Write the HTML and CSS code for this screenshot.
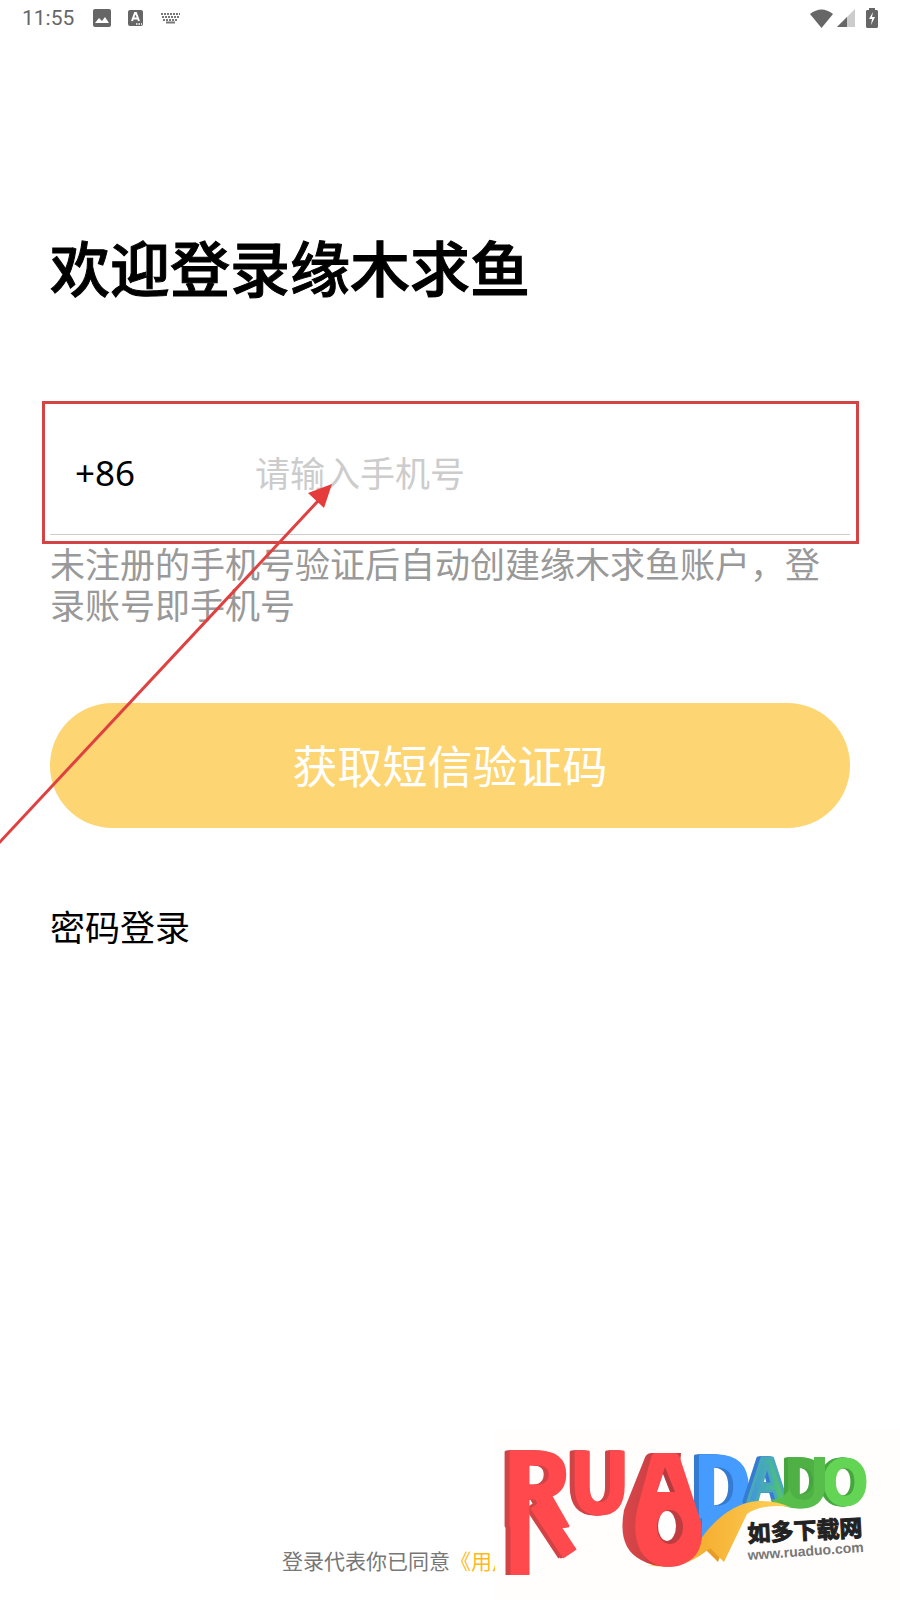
FILE: index.html
```html
<!DOCTYPE html>
<html lang="zh-CN">
<head>
<meta charset="utf-8">
<meta name="viewport" content="width=device-width, initial-scale=1">
<title>欢迎登录缘木求鱼</title>
<link rel="stylesheet" href="styles.css">
</head>
<body>
<div class="screen">
  <header class="status">
    <div class="status-left">
      <time class="clock">11:55</time>
      <svg class="icon" width="18" height="18" viewBox="0 0 18 18"><rect width="18" height="18" rx="2" fill="#666"/><path d="M2 14l4-5 3 3 3-4 4 6z" fill="#fff"/></svg>
      <svg class="icon" width="16" height="18" viewBox="0 0 16 18"><rect y="1" width="15" height="16" rx="2" fill="#666"/><path d="M4 12L7 4h1l3 8M5.300 9.500h4.400" fill="none" stroke="#fff" stroke-width="2"/><path d="M8 15h6" stroke="#fff" stroke-width="1.500" stroke-dasharray="1.500 1"/></svg>
      <svg class="icon" width="20" height="12" viewBox="0 0 20 12"><path d="M0 2h19M1 5h17M2 8h15" stroke="#777" stroke-width="2" stroke-dasharray="2 1"/><path d="M5 10.500h9" stroke="#777" stroke-width="2"/></svg>
    </div>
    <div class="status-right">
      <svg class="icon" width="23" height="19" viewBox="0 0 23 19"><path d="M0 5Q11.500-4 23 5L11.500 19z" fill="#666"/></svg>
      <svg class="icon" width="18" height="18" viewBox="0 0 18 18"><path d="M18 0v18H0z" fill="#ccc"/><path d="M10 8v10H0z" fill="#666"/></svg>
      <svg class="icon battery" width="12" height="20" viewBox="0 0 12 20"><path d="M3 2V0h6v2h2l1 1v16l-1 1H1l-1-1V3l1-1z" fill="#666"/><path d="M7 4L3 11h3l-1 6 4-8H6z" fill="#fff"/></svg>
    </div>
  </header>

  <main class="login">
    <h1 class="title">欢迎登录缘木求鱼</h1>
    <form class="form">
      <div class="phone">
        <button class="code" type="button" aria-label="国家代码">+86</button>
        <input class="number" type="tel" aria-label="手机号" placeholder="请输入手机号">
      </div>
      <p class="hint">未注册的手机号验证后自动创建缘木求鱼账户，登录账号即手机号</p>
      <button class="submit" type="button">获取短信验证码</button>
    </form>
    <a class="password" href="#">密码登录</a>
  </main>

  <footer class="footer">
    <p class="terms">登录代表你已同意<a class="agreement" href="#">《用户</a></p>
  </footer>

  <svg class="arrow" width="340" height="380" viewBox="0 0 340 380"><path d="M-2 376L318 33" stroke="#df4040" stroke-width="3"/><path d="M332 16l-24 9 16 15z" fill="#e53b3b"/></svg>

  <svg class="logo" width="405" height="170" viewBox="495 1430 405 170" role="img" aria-label="如多下载网">
    <defs>
      <linearGradient id="blend"><stop offset="0" stop-color="#438fee"/><stop offset=".6" stop-color="#45b69b"/><stop offset="1" stop-color="#5cc853"/></linearGradient>
      <linearGradient id="gold"><stop offset="0" stop-color="#ffc52d"/><stop offset=".4" stop-color="#f5b033"/><stop offset="1" stop-color="#ffd35b"/></linearGradient>
      <linearGradient id="side"><stop offset="0" stop-color="#d94649"/><stop offset="1" stop-color="#bd3a3f"/></linearGradient>
    </defs>
    <rect x="495" y="1430" width="405" height="170" fill="#fffefd"/>
    <g class="mark">
      <g class="deep red" fill="#ff494c" stroke="#ff494c">
        <text class="mark-r" x="502" y="1526">R</text>
        <path d="M520 1453v122" stroke-width="19"/>
        <path d="M537 1504l33 50" stroke-width="16"/>
      </g>
      <text class="mark-u deep red" x="569" y="1513" fill="#ff494c" stroke="#ff494c">U</text>
      <g class="deep blue" fill="#469bff" stroke="#469bff">
        <text class="mark-d" x="693" y="1517">D</text>
        <path d="M702 1512h46q-14 18-46 28z" stroke="none"/>
      </g>
      <text class="mark-s thin blue" x="748" y="1502" fill="url(#blend)" stroke="#49a9b8">A</text>
      <text class="mark-s thin green" x="784" y="1503" fill="#4fb045" stroke="#4fb045">D</text>
      <text class="mark-s thin green" x="822" y="1504" fill="#64d454" stroke="#64d454">O</text>
      <path d="M770 1500Q788 1511 808 1508Q822 1505 825 1490V1457h-11v32q0 11-10 11-12 0-14-11l-8 9z" fill="#58be4b"/>
    </g>
    <path d="M706 1550l12 12 8-22z" fill="#e79d25"/>
    <path d="M648 1565Q684 1565 706 1532Q730 1503 758 1501Q775 1500 790 1507Q763 1503 747 1514L724 1562L710 1548Q683 1572 648 1565z" fill="url(#gold)"/>
    <path d="M651 1453q-5 0-7 7l-20 50q-7 38 17 50 14 8 30 6l10-113z" fill="url(#side)"/>
    <path fill="#ff484b" d="M654 1453h20q5 0 6 5l21 64q6 36-23 44-23 5-37-14-9-17-4-42l14-52q1-4 3-5z"/>
    <path d="M665 1467l-8 25h18z" fill="#b53b40"/>
    <path d="M663 1474l-6 18h13z" fill="#fff"/>
    <ellipse cx="670" cy="1527" rx="13" ry="17" fill="#bf3c41"/>
    <ellipse cx="667" cy="1526" rx="9" ry="15" fill="#fff"/>
    <g class="caption">
      <text class="site" x="748" y="1542" transform="rotate(-3 748 1542)">如多下载网</text>
      <text class="url" x="748" y="1560" transform="rotate(-4 748 1560)">www.ruaduo.com</text>
    </g>
  </svg>
</div>
</body>
</html>
```
FILE: styles.css
```css
* { box-sizing: border-box; }
body {
  margin: 0;
  background: #fff;
  color: #000;
  font-family: Roboto, "Noto Sans CJK SC", sans-serif;
}
.screen {
  position: relative;
  display: flex;
  flex-direction: column;
  min-height: 100vh;
}
.status {
  display: flex;
  justify-content: space-between;
  align-items: center;
  height: 36px;
  padding: 0 22px;
}
.status-left { display: flex; align-items: center; gap: 17px; }
.status-right { display: flex; align-items: center; gap: 4px; }
.icon { display: block; }
.battery { margin-left: 7px; }
.clock { margin-right: 2px; color: #666; font-size: 21px; line-height: 38px; }
.login { padding: 188px 50px 0; }
.title {
  margin: 0;
  font: 500 60px/84px "Noto Sans CJK SC", sans-serif;
  -webkit-text-stroke: 1px #000;
}
.phone {
  position: relative;
  display: flex;
  align-items: center;
  height: 123px;
  margin-top: 104px;
  border-bottom: 1px solid #ccc;
}
.phone::after {
  content: "";
  position: absolute;
  inset: -11px -9px -10px -8px;
  border: 3px solid #d54444;
  pointer-events: none;
}
.code {
  width: 180px;
  padding: 0 0 0 25px;
  border: 0;
  background: none;
  color: #000;
  font: 35px/48px "Noto Sans", sans-serif;
  text-align: left;
}
.number {
  flex: 1;
  min-width: 0;
  padding: 0 25px 2px;
  border: 0;
  outline: 0;
  background: none;
  font: 35px/52px "Noto Sans CJK SC", sans-serif;
}
.number::placeholder { color: #ccc; opacity: 1; }
.hint {
  margin: 7px 0 0;
  color: #999;
  font: 35px/41px "Noto Sans CJK SC", sans-serif;
}
.submit {
  display: block;
  width: 100%;
  height: 125px;
  margin-top: 79px;
  padding: 0 0 1px;
  border: 0;
  border-radius: 63px;
  background: #fdd572;
  color: #fff;
  font: 45px/66px "Noto Sans CJK SC", sans-serif;
}
.password {
  display: inline-block;
  margin-top: 72px;
  color: #000;
  font: 35px/52px "Noto Sans CJK SC", sans-serif;
  text-decoration: none;
}
.footer { margin-top: auto; padding: 0 0 24px 282px; }
.terms {
  margin: 0;
  color: #777;
  font: 21px/32px "Noto Sans CJK SC", sans-serif;
}
.agreement { color: #ffb91c; text-decoration: none; }
.arrow { position: absolute; left: 0; top: 468px; pointer-events: none; }
.logo { position: absolute; right: 0; bottom: 0; overflow: visible; }
.mark { font-family: "Noto Sans CJK SC", sans-serif; font-weight: 700; }
.mark text { stroke-width: 3px; stroke-linejoin: round; }
.red { --side: #d24346; }
.blue { --side: #347bd1; }
.green { --side: #45a53f; }
.deep { filter: drop-shadow(-2px 0 var(--side)) drop-shadow(-3px 0 var(--side)); }
.thin { filter: drop-shadow(-2px 0 var(--side)) drop-shadow(-2px 0 var(--side)); }
.mark-r { font-size: 100px; }
.mark-u { font-size: 82px; }
.mark-d { font-size: 82px; }
.mark-s { font-size: 60px; }
.site { fill: #222; stroke: #222; stroke-width: 1px; font: 700 23px "Noto Sans CJK SC", sans-serif; }
.url { fill: #777; font: 700 14px "Liberation Sans", sans-serif; }
```
